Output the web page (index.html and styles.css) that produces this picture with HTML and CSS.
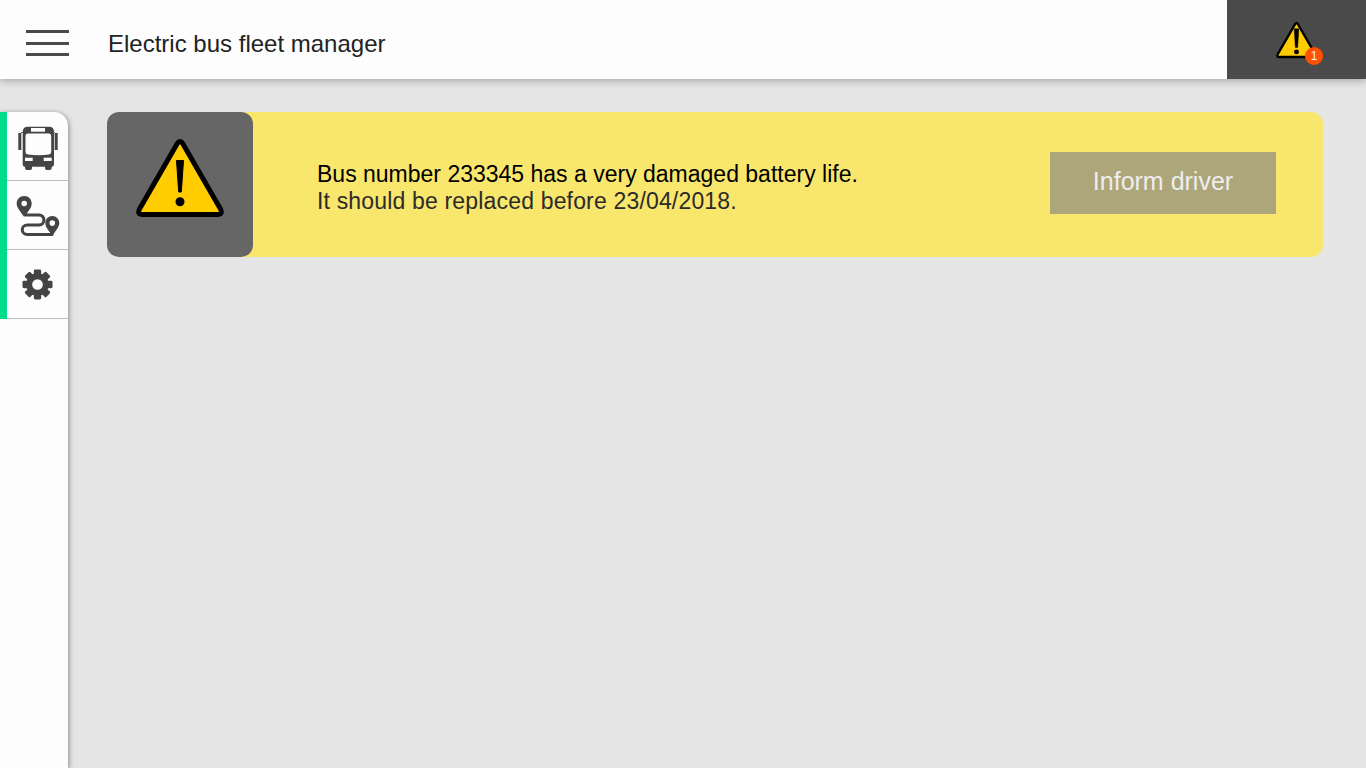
FILE: index.html
```html
<!DOCTYPE html>
<html lang="en">
<head>
<meta charset="utf-8">
<title>Electric bus fleet manager</title>
<link rel="stylesheet" href="styles.css">
</head>
<body>
<div class="app">
  <header class="topbar">
    <button class="hamburger" aria-label="Menu"><span></span><span></span><span></span></button>
    <h1 class="title">Electric bus fleet manager</h1>
    <div class="alerts">
      <div class="alert-icon">
        <svg class="tri-small" viewBox="0 0 88 78" width="41" height="38">
          <path d="M41 5 Q44 0 47 5 L84.500 70 Q87 75.500 81.500 75.500 H6.500 Q1 75.500 3.500 70 Z" fill="#ffcc00" stroke="#000" stroke-width="5" stroke-linejoin="round"/>
          <path d="M39 15 H49 L46.500 55 H41.500 Z" fill="#000" stroke="#000" stroke-width="1" stroke-linejoin="round"/>
          <circle cx="44" cy="64.500" r="5.300" fill="#000"/>
        </svg>
        <span class="badge">1</span>
      </div>
    </div>
  </header>
  <div class="body">
    <nav class="sidebar">
      <a class="nav-item nav-bus">
        <svg viewBox="0 0 40 44" width="40" height="44">
          <path fill="#444" d="M4.700 6 Q4.700 0.700 10 0.700 H31 Q36 0.700 36 6 V38 Q36 40.700 33.700 40.700 V42 Q33.700 44 31.700 44 H28.500 Q27 44 27 42 V40.700 H14 V42 Q14 44 12.500 44 H9 Q7 44 7 42 V40.700 Q4.700 40.700 4.700 38 Z"/>
          <path fill="#fdfdfd" d="M7.500 10 Q7.500 7.500 10 7.500 H31 Q33.200 7.500 33.200 10 V26 Q33.200 28 31 28.500 Q20.500 30 10 28.500 Q7.500 28 7.500 26 Z"/>
          <rect x="13" y="2" width="14" height="3.700" fill="#fdfdfd"/>
          <rect x="7" y="31.700" width="7.700" height="3.300" fill="#fdfdfd"/>
          <rect x="25.700" y="31.700" width="8" height="3.300" fill="#fdfdfd"/>
          <rect x="0.300" y="7" width="3" height="17" fill="#444"/>
          <rect x="36.700" y="7" width="3" height="17" fill="#444"/>
          <path d="M3 6.500 H5 M35 6.500 H37" stroke="#666" stroke-width="1" fill="none"/>
        </svg>
      </a>
      <a class="nav-item nav-route">
        <svg viewBox="0 0 44 44" width="44" height="44">
          <path fill="#444" fill-rule="evenodd" d="M8.200 2 C3.700 2 0.700 5.500 0.700 9.500 C0.700 14 5 18 8.200 23 C11.500 18 15.700 14 15.700 9.500 C15.700 5.500 12.700 2 8.200 2 Z M8.200 6.700 A2.800 2.800 0 1 1 8.200 12.300 A2.800 2.800 0 1 1 8.200 6.700 Z"/>
          <path fill="#444" fill-rule="evenodd" d="M36.300 22 C32.300 22 29.300 25.300 29.300 29 C29.300 33.300 33.300 37 36.300 42 C39.300 37 43.300 33.300 43.300 29 C43.300 25.300 40.300 22 36.300 22 Z M36.300 26.300 A2.800 2.800 0 1 1 36.300 31.900 A2.800 2.800 0 1 1 36.300 26.300 Z"/>
          <path fill="none" stroke="#444" stroke-width="3" stroke-linecap="round" d="M10 21 H23 C29.500 21 29.500 31 23 31 H11.500 C4.500 31 4.500 40.500 11.500 40.500 H36"/>
        </svg>
      </a>
      <a class="nav-item">
        <svg viewBox="-16 -16 32 32" width="31" height="31">
          <g fill="#444">
            <circle r="11.500"/>
            <rect x="-3.800" y="-15.500" width="7.600" height="31" rx="1.500"/>
            <rect x="-3.800" y="-15.500" width="7.600" height="31" rx="1.500" transform="rotate(45)"/>
            <rect x="-3.800" y="-15.500" width="7.600" height="31" rx="1.500" transform="rotate(90)"/>
            <rect x="-3.800" y="-15.500" width="7.600" height="31" rx="1.500" transform="rotate(135)"/>
          </g>
          <circle r="5.500" fill="#fdfdfd"/>
        </svg>
      </a>
    </nav>
    <main class="content">
      <section class="notice">
        <div class="notice-icon">
          <svg viewBox="0 0 88 78" width="88" height="78">
            <path d="M41 5 Q44 0 47 5 L84.500 70 Q87 75.500 81.500 75.500 H6.500 Q1 75.500 3.500 70 Z" fill="#ffcc00" stroke="#000" stroke-width="5" stroke-linejoin="round"/>
            <path d="M40.500 21.500 H47.500 L45.300 53 H42.700 Z" fill="#000" stroke="#000" stroke-width="1" stroke-linejoin="round"/>
            <circle cx="44" cy="62.700" r="4.500" fill="#000"/>
          </svg>
        </div>
        <div class="notice-text">
          <p class="notice-main">Bus number 233345 has a very damaged battery life.</p>
          <p class="notice-sub">It should be replaced before 23/04/2018.</p>
        </div>
        <button class="inform">Inform driver</button>
      </section>
    </main>
  </div>
</div>
</body>
</html>
```
FILE: styles.css
```css
* { box-sizing: border-box; }
html, body { margin: 0; height: 100%; }
body { font-family: "Liberation Sans", Arial, sans-serif; background: #e5e5e5; overflow: hidden; }
.app { display: flex; flex-direction: column; height: 768px; }
.topbar { display: flex; align-items: center; height: 79px; background: #fdfdfd; box-shadow: 0 2px 8px rgba(0,0,0,.28); position: relative; z-index: 2; flex: none; }
.hamburger { display: flex; flex-direction: column; justify-content: space-between; width: 43px; height: 26px; margin: 7px 0 0 26px; padding: 0; border: 0; background: none; }
.hamburger span { display: block; height: 3px; background: #4a4a4a; }
.title { margin: 9px 0 0 39px; font-size: 24px; line-height: 28px; font-weight: 400; color: #222; flex: 1; }
.alerts { width: 139px; height: 79px; background: #4a4a4a; display: flex; align-items: center; justify-content: center; }
.alert-icon { position: relative; width: 41px; height: 38px; margin-top: 1px; }
.tri-small { display: block; }
.badge { position: absolute; right: -6px; bottom: -6px; width: 18px; height: 18px; border-radius: 50%; background: #ff5005; color: #f5f5f5; font-size: 12px; line-height: 18px; text-align: center; }
.body { display: flex; flex: 1; min-height: 0; }
.sidebar { width: 68px; margin-top: 33px; background: #fdfdfd; border-top-right-radius: 14px; border-left: 7px solid #00dc8c; box-shadow: 1px 1px 5px rgba(0,0,0,.4); display: flex; flex-direction: column; background-clip: padding-box; position: relative; flex: none; }
.nav-item { display: flex; align-items: center; justify-content: center; height: 69px; border-bottom: 1px solid #bdbdbd; }
.nav-bus svg { margin-top: 4px; }
.nav-route svg { margin-top: 2px; }
.sidebar::after { content: ""; position: absolute; left: -7px; top: 207px; width: 7px; bottom: 0; background: #fdfdfd; }
.content { flex: 1; padding: 33px 43px 0 39px; }
.notice { display: flex; align-items: center; height: 145px; background: #f9e66c; border-radius: 12px; }
.notice-icon { width: 146px; height: 145px; background: #666; border-radius: 12px; display: flex; align-items: center; justify-content: center; flex: none; }
.notice-icon svg { margin-bottom: 13px; }
.notice-text { flex: 1; padding-left: 64px; margin-top: 5px; }
.notice-text p { margin: 0; font-size: 23px; line-height: 28px; color: #000; }
.notice-text .notice-sub { color: #2b2b2b; letter-spacing: .17px; margin-top: -1px; }
.inform { width: 226px; height: 62px; margin: -4px 47px 0 0; border: 0; background: #aca67a; color: #eee; font: 400 25px "Liberation Sans", Arial, sans-serif; padding: 0 0 2px; }
```
